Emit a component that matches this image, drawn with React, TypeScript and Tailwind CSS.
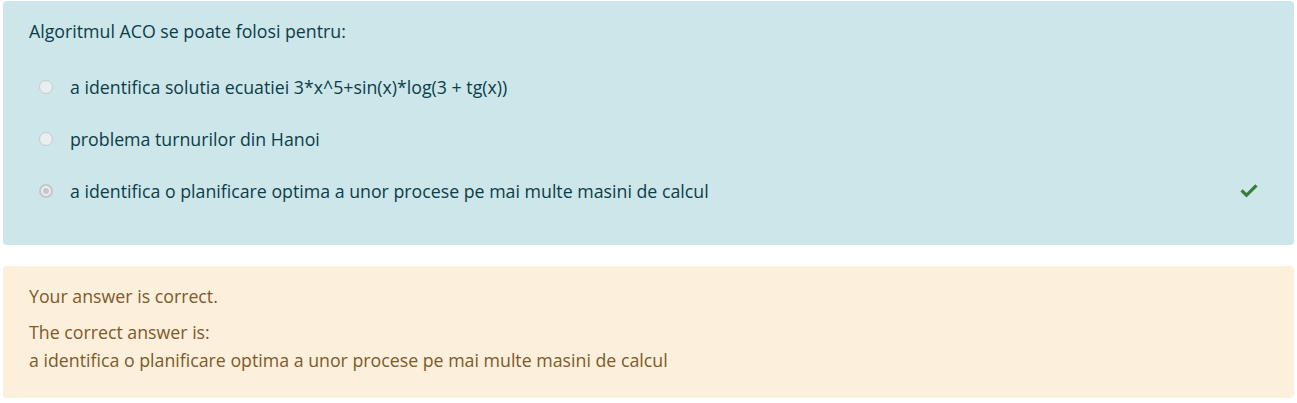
import { useState } from "react";

const options = [
  "a identifica solutia ecuatiei 3*x^5+sin(x)*log(3 + tg(x))",
  "problema turnurilor din Hanoi",
  "a identifica o planificare optima a unor procese pe mai multe masini de calcul",
];

function Radio({ checked }: { checked: boolean }) {
  return (
    <span
      className={
        checked
          ? "flex h-[14px] w-[14px] shrink-0 items-center justify-center rounded-full border-2 border-[#c3c7c9] bg-[#e9eef0]"
          : "flex h-[14px] w-[14px] shrink-0 items-center justify-center rounded-full border border-[#c6ccce] bg-[#e9eef0]"
      }
    >
      {checked && <span className="h-[6px] w-[6px] rounded-full bg-[#c3c7c9]" />}
    </span>
  );
}

export default function App() {
  const [selected] = useState(2);

  return (
    <div
      className="flex h-[403px] w-[1297px] flex-col gap-[21px] bg-white px-[3px] pt-px text-[17.75px]"
      style={{ fontFamily: '"Open Sans", "Noto Sans", sans-serif' }}
    >
      {/* Question */}
      <div className="flex flex-col rounded bg-[#cde6ea] px-[26px] pt-[16px] pb-[28px] text-[#0b3d49]">
        <p className="leading-[28px]">Algoritmul ACO se poate folosi pentru:</p>
        <div className="mt-[16px] flex flex-col">
          {options.map((opt, i) => (
            <div key={opt} className="flex h-[52px] items-center pl-[10px]">
              <Radio checked={i === selected} />
              <span className="ml-[17px] leading-[28px]">{opt}</span>
              {i === selected && (
                <svg
                  className="ml-auto mr-[10px] h-[14px] w-[18px] text-[#3a7d3a]"
                  viewBox="0 0 18 14"
                  fill="currentColor"
                >
                  <path d="M6.5 13.6 0.4 7.5l2.3-2.3 3.8 3.8L15.3 0.2l2.3 2.3z" />
                </svg>
              )}
            </div>
          ))}
        </div>
      </div>

      {/* Feedback */}
      <div className="flex flex-col rounded bg-[#fcefdc] px-[26px] pt-[16px] pb-[24px] leading-[28px] text-[#7d5a29]">
        <p>Your answer is correct.</p>
        <p className="mt-[8px]">The correct answer is:</p>
        <p>a identifica o planificare optima a unor procese pe mai multe masini de calcul</p>
      </div>
    </div>
  );
}
